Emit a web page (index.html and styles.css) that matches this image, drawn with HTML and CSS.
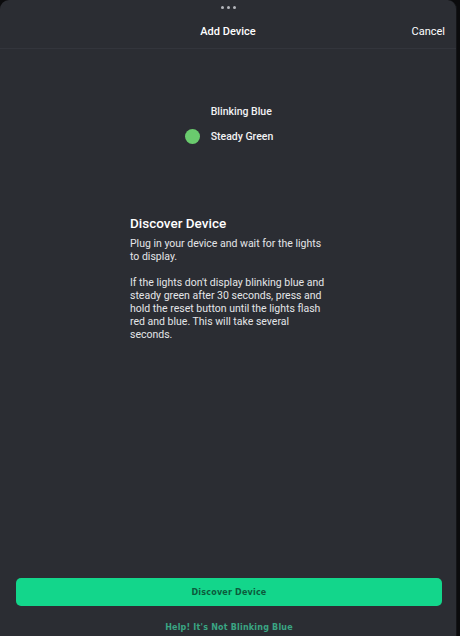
FILE: index.html
```html
<!DOCTYPE html>
<html lang="en">
<head>
    <meta charset="UTF-8">
    <meta name="viewport" content="width=device-width, initial-scale=1.0">
    <title>Add Device</title>
    <link rel="stylesheet" href="styles.css">
</head>
<body>
    <div class="sheet">
        <div class="grabber">
            <span></span><span></span><span></span>
        </div>
        <header class="topbar">
            <h1>Add Device</h1>
            <a class="cancel" href="#">Cancel</a>
        </header>

        <!-- Light status legend -->
        <div class="lights">
            <div class="light">
                <span class="dot"></span>
                <span>Blinking Blue</span>
            </div>
            <div class="light">
                <span class="dot green"></span>
                <span>Steady Green</span>
            </div>
        </div>

        <div class="info">
            <h2>Discover Device</h2>
            <p>Plug in your device and wait for the lights to display.</p>
            <p>If the lights don't display blinking blue and steady green after 30 seconds, press and hold the reset button until the lights flash red and blue. This will take several seconds.</p>
        </div>

        <div class="actions">
            <button class="discover">Discover Device</button>
            <a class="help" href="#">Help! It's Not Blinking Blue</a>
        </div>
    </div>
</body>
</html>
```

FILE: styles.css
```css
body {
    margin: 0;
    padding: 0;
    background-color: #0b0b0d;
    font-family: Roboto, "Liberation Sans", Arial, sans-serif;
    color: #f2f2f4;
}

.sheet {
    width: 457px;
    height: 636px;
    background-color: #2b2d33;
    border-radius: 9px 9px 0 0;
    display: flex;
    flex-direction: column;
    box-sizing: border-box;
    border-right: 1px solid #141518;
}

.grabber {
    display: flex;
    justify-content: center;
    gap: 3px;
    padding-top: 6px;
    height: 8px;
}

.grabber span {
    width: 3px;
    height: 3px;
    border-radius: 50%;
    background-color: #b4b6bc;
}

.topbar {
    position: relative;
    height: 34px;
    border-bottom: 1px solid #33353c;
    display: flex;
    align-items: center;
    justify-content: center;
}

.topbar h1 {
    margin: 0;
    font-size: 11px;
    font-weight: 500;
    color: #ffffff;
}

.cancel {
    position: absolute;
    right: 11px;
    top: 11px;
    font-size: 11px;
    color: #ffffff;
    text-decoration: none;
}

.lights {
    align-self: center;
    margin-top: 55px;
    margin-left: 2px;
    display: flex;
    flex-direction: column;
    gap: 10px;
}

.light {
    display: flex;
    align-items: center;
    gap: 11px;
    font-size: 10.5px;
    font-weight: 500;
    height: 15px;
}

.dot {
    width: 15px;
    height: 15px;
    border-radius: 50%;
}

.dot.green {
    background-color: #6acb6e;
}

.info {
    align-self: center;
    width: 198px;
    margin-top: 71px;
    margin-left: 2px;
}

.info h2 {
    margin: 0 0 6px;
    font-size: 13.5px;
    font-weight: 500;
    color: #ffffff;
}

.info p {
    margin: 0 0 13px;
    font-size: 10.5px;
    line-height: 13px;
    color: #e4e5e8;
}

.actions {
    margin-top: auto;
    padding: 0 14px 0 16px;
    display: flex;
    flex-direction: column;
    align-items: center;
}

.discover {
    width: 100%;
    height: 28px;
    border: none;
    border-radius: 5px;
    background-color: #13d68b;
    color: #0c5b3c;
    font-family: "DejaVu Sans", Verdana, sans-serif;
    font-size: 8px;
    font-weight: bold;
    letter-spacing: 0.2px;
    cursor: pointer;
}

.help {
    margin-top: 17px;
    height: 13px;
    font-family: "DejaVu Sans", Verdana, sans-serif;
    font-size: 8px;
    font-weight: bold;
    letter-spacing: 0.2px;
    color: #3aa583;
    text-decoration: none;
}
```
